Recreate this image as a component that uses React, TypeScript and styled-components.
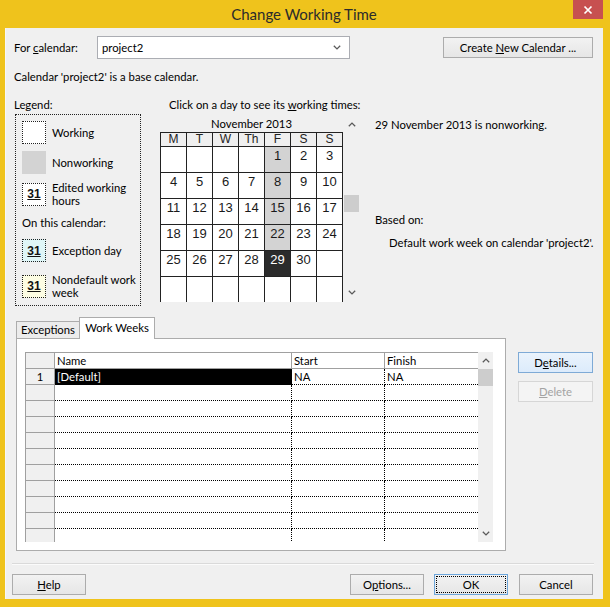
import React from "react";
import styled, { createGlobalStyle } from "styled-components";

const UI = `Lato, "Liberation Sans", Arial, sans-serif`;
const YELLOW = "#EFC31C";

const GlobalStyle = createGlobalStyle`
  html, body { margin: 0; padding: 0; background: ${YELLOW}; }
  body { font-family: ${UI}; font-size: 11.3px; color: #000; }
  * { box-sizing: border-box; }
`;

const Window = styled.div`
  width: 610px;
  height: 607px;
  background: ${YELLOW};
  display: flex;
  flex-direction: column;
  padding: 0 7px 8px 5px;
`;

const TitleBar = styled.div`
  height: 28px;
  display: grid;
  grid-template-columns: 1fr auto 1fr;
  align-items: start;
`;

const Title = styled.div`
  grid-column: 2;
  line-height: 28px;
  font-size: 15px;
  color: #2b2b2b;
`;

const CloseBtn = styled.div`
  grid-column: 3;
  justify-self: end;
  width: 30px;
  height: 19px;
  background: #c75050;
  display: flex;
  align-items: center;
  justify-content: center;
`;

const Panel = styled.div`
  flex: 1;
  background: #f0f0f0;
  border-left: 1px solid #f7f7f7;
  padding: 8px 10px 0 8px;
  display: flex;
  flex-direction: column;
`;

const TopRow = styled.div`
  display: flex;
  align-items: center;
  height: 23px;
`;

const FieldLabel = styled.div`
  width: 83px;
  line-height: 16px;
`;

const Combo = styled.div`
  width: 253px;
  height: 23px;
  background: #fff;
  border: 1px solid #abadb3;
  display: flex;
  align-items: center;
  padding: 0 8px 0 4px;
  justify-content: space-between;
`;

const Button = styled.button<{ $w?: number; $kind?: "normal" | "default" | "hot" | "disabled" }>`
  height: 21px;
  width: ${(p) => p.$w ?? 74}px;
  padding: 0;
  font-family: ${UI};
  font-size: 11.3px;
  line-height: 19px;
  color: ${(p) => (p.$kind === "disabled" ? "#a3a3a3" : "#000")};
  border: 1px solid
    ${(p) =>
      p.$kind === "default" ? "#6ea6da" : p.$kind === "hot" ? "#7eaad6" : p.$kind === "disabled" ? "#d6d6d6" : "#acacac"};
  background: ${(p) =>
    p.$kind === "hot"
      ? "linear-gradient(#eaf3fc, #dcebfb)"
      : p.$kind === "disabled"
      ? "#f4f4f4"
      : "linear-gradient(#f2f2f2, #e6e6e6)"};
  outline: ${(p) => (p.$kind === "default" ? "1px dotted #000" : "none")};
  outline-offset: -3px;
  flex: none;
`;

const CreateButton = styled(Button)`
  margin-left: auto;
`;

const InfoLine = styled.div`
  margin-top: 10px;
  line-height: 16px;
`;

const Main = styled.div`
  display: flex;
  margin-top: 12px;
  align-items: flex-start;
`;

const LegendCol = styled.div`
  width: 127px;
  flex: none;
  display: flex;
  flex-direction: column;
`;

const SectionLabel = styled.div<{ $indent?: number }>`
  line-height: 16px;
  padding-left: ${(p) => p.$indent ?? 0}px;
  white-space: nowrap;
`;

const LegendBox = styled.div`
  margin: 1px 0 0 1px;
  width: 126px;
  height: 192px;
  border: 1px dotted #222;
  padding: 6px 0 0 6px;
  display: flex;
  flex-direction: column;
`;

const LegendItem = styled.div<{ $mt?: number }>`
  display: flex;
  align-items: center;
  margin-top: ${(p) => p.$mt ?? 0}px;
`;

const Swatch = styled.div<{ $bg: string; $solid?: boolean }>`
  width: 24px;
  height: 23px;
  background: ${(p) => p.$bg};
  border: 1px ${(p) => (p.$solid ? "solid" : "dotted")} ${(p) => (p.$solid ? p.$bg : "#222")};
  display: flex;
  align-items: center;
  justify-content: center;
  font-family: "Liberation Sans", Arial, sans-serif;
  font-weight: bold;
  font-size: 12px;
  text-decoration: underline;
  color: #111;
  flex: none;
`;

const LegendText = styled.div`
  margin-left: 6px;
  line-height: 13px;
  white-space: nowrap;
`;

const OnCalLabel = styled.div`
  margin-top: 8px;
  line-height: 16px;
`;

const CalCol = styled.div`
  margin-left: 19px;
  width: 199px;
  flex: none;
  display: flex;
  flex-direction: column;
`;

const CalBody = styled.div`
  display: flex;
  margin-top: 3px;
`;

const CalMain = styled.div`
  display: flex;
  flex-direction: column;
`;

const MonthLabel = styled.div`
  line-height: 16px;
  text-align: center;
`;

const CalGrid = styled.div`
  width: 183px;
  height: 170px;
  overflow: hidden;
  display: grid;
  grid-template-columns: repeat(7, 26px);
  grid-template-rows: 14px repeat(6, 26px);
  border-left: 1px solid #222;
  border-top: 1px solid #222;
  font-family: "Liberation Sans", Arial, sans-serif;
`;

const DayHead = styled.div`
  background: #efefef;
  border-right: 1px solid #222;
  border-bottom: 1px solid #222;
  text-align: center;
  font-size: 12px;
  line-height: 13px;
  color: #222;
`;

const DayCell = styled.div<{ $state: "work" | "off" | "sel" }>`
  background: ${(p) => (p.$state === "off" ? "#d3d3d3" : p.$state === "sel" ? "#2b2b2b" : "#fff")};
  color: ${(p) => (p.$state === "sel" ? "#fff" : "#1a1a1a")};
  border-right: 1px solid #222;
  border-bottom: 1px solid #222;
  text-align: center;
  font-size: 13px;
  line-height: 15px;
  padding-top: 1px;
`;

const VScroll = styled.div<{ $h: number }>`
  width: 15px;
  height: ${(p) => p.$h}px;
  display: flex;
  flex-direction: column;
  background: #f0f0f0;
  flex: none;
`;

const ArrowBox = styled.div<{ $h: number }>`
  height: ${(p) => p.$h}px;
  display: flex;
  align-items: center;
  justify-content: center;
  flex: none;
`;

const Thumb = styled.div<{ $mt: number; $h: number }>`
  margin-top: ${(p) => p.$mt}px;
  height: ${(p) => p.$h}px;
  background: #cdcdcd;
  flex: none;
`;

const Spacer = styled.div`
  flex: 1;
`;

const CalScroll = styled(VScroll)`
  margin-left: 1px;
`;

const InfoCol = styled.div`
  margin-left: 16px;
  display: flex;
  flex-direction: column;
`;

const InfoText = styled.div<{ $mt: number; $indent?: number }>`
  margin-top: ${(p) => p.$mt}px;
  padding-left: ${(p) => p.$indent ?? 0}px;
  line-height: 16px;
  white-space: nowrap;
`;

const TabsRow = styled.div`
  display: flex;
  margin-top: 11px;
`;

const TabGroup = styled.div`
  margin-left: 2px;
  width: 490px;
  display: flex;
  flex-direction: column;
`;

const TabStrip = styled.div`
  height: 21px;
  display: flex;
  align-items: flex-end;
`;

const Tab = styled.div<{ $active?: boolean; $w: number }>`
  width: ${(p) => p.$w}px;
  height: ${(p) => (p.$active ? 22 : 17)}px;
  margin-bottom: ${(p) => (p.$active ? -1 : 0)}px;
  margin-left: ${(p) => (p.$active ? -1 : 0)}px;
  background: ${(p) => (p.$active ? "#fff" : "#ececec")};
  border: 1px solid #acacac;
  border-bottom: 0;
  text-align: center;
  line-height: ${(p) => (p.$active ? 19 : 15)}px;
  position: relative;
  z-index: ${(p) => (p.$active ? 1 : 0)};
`;

const TabPanel = styled.div`
  height: 213px;
  border: 1px solid #acacac;
  background: #fff;
  padding: 13px 11px 8px 8px;
`;

const Table = styled.div`
  display: flex;
  height: 190px;
  overflow: hidden;
`;

const TableMain = styled.div`
  width: 453px;
  display: flex;
  flex-direction: column;
  flex: none;
`;

const TRow = styled.div<{ $head?: boolean }>`
  display: grid;
  grid-template-columns: 30px 237px 93px 93px;
  height: ${(p) => (p.$head ? 17 : 16)}px;
  flex: none;
`;

const RowHead = styled.div<{ $corner?: boolean }>`
  background: #f0f0f0;
  border-left: 1px solid #a0a0a0;
  border-right: 1px solid #a0a0a0;
  border-bottom: 1px solid #a0a0a0;
  border-top: ${(p) => (p.$corner ? "1px solid #a0a0a0" : "none")};
  text-align: center;
  line-height: 15px;
`;

const ColHead = styled.div<{ $last?: boolean }>`
  background: #fff;
  border-top: 1px solid #a0a0a0;
  border-bottom: 1px solid #a0a0a0;
  border-right: ${(p) => (p.$last ? "none" : "1px solid #a0a0a0")};
  padding-left: 2px;
  line-height: 15px;
`;

const DataCell = styled.div<{ $last?: boolean; $sel?: boolean }>`
  border-bottom: 1px dotted #000;
  border-right: ${(p) => (p.$last ? "none" : "1px dotted #000")};
  background: ${(p) => (p.$sel ? "#000" : "#fff")};
  color: ${(p) => (p.$sel ? "#fff" : "#000")};
  padding-left: 2px;
  line-height: 15px;
  white-space: nowrap;
  overflow: hidden;
`;

const SideButtons = styled.div`
  margin-left: 12px;
  padding-top: 35px;
  display: flex;
  flex-direction: column;
  gap: 8px;
`;

const Separator = styled.div`
  margin: 12px -1px 0 -2px;
  height: 2px;
  border-top: 1px solid #dadada;
  border-bottom: 1px solid #fbfbfb;
`;

const BottomRow = styled.div`
  display: flex;
  margin-top: 9px;
`;

const HelpButton = styled(Button)`
  margin-left: -2px;
  margin-right: auto;
`;

const OkButton = styled(Button)`
  margin: 0 11px 0 10px;
`;

const Chevron = ({ up, color = "#5a5a5a" }: { up?: boolean; color?: string }) => (
  <svg width="8" height="5" viewBox="0 0 8 5">
    <path
      d={up ? "M0.8 4.3 L4 1.1 L7.2 4.3" : "M0.8 0.7 L4 3.9 L7.2 0.7"}
      fill="none"
      stroke={color}
      strokeWidth="1.3"
    />
  </svg>
);

const CloseGlyph = () => (
  <svg width="10" height="10" viewBox="0 0 10 10">
    <path d="M1.5 1.5 L8.5 8.5 M8.5 1.5 L1.5 8.5" stroke="#fff" strokeWidth="1.7" />
  </svg>
);

const heads = ["M", "T", "W", "Th", "F", "S", "S"];
const days: (number | null)[] = [
  null, null, null, null, 1, 2, 3,
  4, 5, 6, 7, 8, 9, 10,
  11, 12, 13, 14, 15, 16, 17,
  18, 19, 20, 21, 22, 23, 24,
  25, 26, 27, 28, 29, 30, null,
  null, null, null, null, null, null, null,
];

const rows = Array.from({ length: 12 }, (_, i) => i);

export default function App() {
  return (
    <>
      <GlobalStyle />
      <Window>
        <TitleBar>
          <Title>Change Working Time</Title>
          <CloseBtn>
            <CloseGlyph />
          </CloseBtn>
        </TitleBar>
        <Panel>
          <TopRow>
            <FieldLabel>
              For <u>c</u>alendar:
            </FieldLabel>
            <Combo>
              <span>project2</span>
              <Chevron />
            </Combo>
            <CreateButton $w={150}>
              Create <u>N</u>ew Calendar ...
            </CreateButton>
          </TopRow>
          <InfoLine>Calendar 'project2' is a base calendar.</InfoLine>
          <Main>
            <LegendCol>
              <SectionLabel>Legend:</SectionLabel>
              <LegendBox>
                <LegendItem>
                  <Swatch $bg="#fff" />
                  <LegendText>Working</LegendText>
                </LegendItem>
                <LegendItem $mt={7}>
                  <Swatch $bg="#d3d3d3" $solid />
                  <LegendText>Nonworking</LegendText>
                </LegendItem>
                <LegendItem $mt={7}>
                  <Swatch $bg="#fff">31</Swatch>
                  <LegendText>
                    Edited working
                    <br />
                    hours
                  </LegendText>
                </LegendItem>
                <OnCalLabel>On this calendar:</OnCalLabel>
                <LegendItem $mt={8}>
                  <Swatch $bg="#dff6f7">31</Swatch>
                  <LegendText>Exception day</LegendText>
                </LegendItem>
                <LegendItem $mt={11}>
                  <Swatch $bg="#fdfde3">31</Swatch>
                  <LegendText>
                    Nondefault work
                    <br />
                    week
                  </LegendText>
                </LegendItem>
              </LegendBox>
            </LegendCol>
            <CalCol>
              <SectionLabel $indent={9}>
                Click on a day to see its <u>w</u>orking times:
              </SectionLabel>
              <CalBody>
                <CalMain>
                  <MonthLabel>November 2013</MonthLabel>
                  <CalGrid>
                    {heads.map((h, i) => (
                      <DayHead key={"h" + i}>{h}</DayHead>
                    ))}
                    {days.map((d, i) => {
                      const col = i % 7;
                      const state = d === 29 ? "sel" : d !== null && col === 4 ? "off" : "work";
                      return (
                        <DayCell key={"d" + i} $state={state}>
                          {d ?? ""}
                        </DayCell>
                      );
                    })}
                  </CalGrid>
                </CalMain>
                <CalScroll $h={186}>
                  <ArrowBox $h={16}>
                    <Chevron up />
                  </ArrowBox>
                  <Thumb $mt={63} $h={17} />
                  <Spacer />
                  <ArrowBox $h={20}>
                    <Chevron />
                  </ArrowBox>
                </CalScroll>
              </CalBody>
            </CalCol>
            <InfoCol>
              <InfoText $mt={20}>29 November 2013 is nonworking.</InfoText>
              <InfoText $mt={79}>Based on:</InfoText>
              <InfoText $mt={7} $indent={14}>
                Default work week on calendar 'project2'.
              </InfoText>
            </InfoCol>
          </Main>
          <TabsRow>
            <TabGroup>
              <TabStrip>
                <Tab $w={64}>Exceptions</Tab>
                <Tab $w={76} $active>
                  Work Weeks
                </Tab>
              </TabStrip>
              <TabPanel>
                <Table>
                  <TableMain>
                    <TRow $head>
                      <RowHead $corner />
                      <ColHead>Name</ColHead>
                      <ColHead>Start</ColHead>
                      <ColHead $last>Finish</ColHead>
                    </TRow>
                    {rows.map((r) => (
                      <TRow key={r}>
                        <RowHead>{r === 0 ? "1" : ""}</RowHead>
                        <DataCell $sel={r === 0}>{r === 0 ? "[Default]" : ""}</DataCell>
                        <DataCell>{r === 0 ? "NA" : ""}</DataCell>
                        <DataCell $last>{r === 0 ? "NA" : ""}</DataCell>
                      </TRow>
                    ))}
                  </TableMain>
                  <VScroll $h={190}>
                    <ArrowBox $h={17}>
                      <Chevron up />
                    </ArrowBox>
                    <Thumb $mt={0} $h={17} />
                    <Spacer />
                    <ArrowBox $h={18}>
                      <Chevron />
                    </ArrowBox>
                  </VScroll>
                </Table>
              </TabPanel>
            </TabGroup>
            <SideButtons>
              <Button $w={75} $kind="hot">
                D<u>e</u>tails...
              </Button>
              <Button $w={75} $kind="disabled">
                <u>D</u>elete
              </Button>
            </SideButtons>
          </TabsRow>
          <Separator />
          <BottomRow>
            <HelpButton>
              <u>H</u>elp
            </HelpButton>
            <Button>
              O<u>p</u>tions...
            </Button>
            <OkButton $kind="default">OK</OkButton>
            <Button>Cancel</Button>
          </BottomRow>
        </Panel>
      </Window>
    </>
  );
}
